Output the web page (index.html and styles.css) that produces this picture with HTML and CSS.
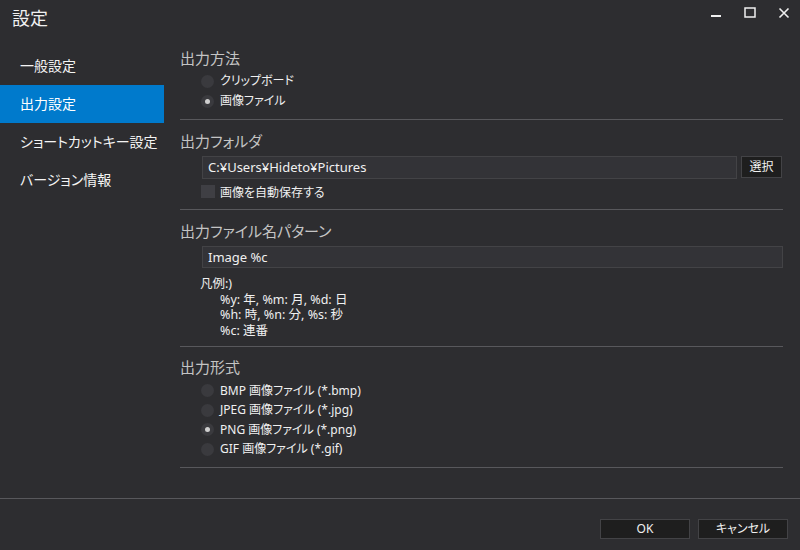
FILE: index.html
```html
<!DOCTYPE html>
<html lang="ja">
<head>
<meta charset="utf-8">
<title>設定</title>
<link rel="stylesheet" href="styles.css">
</head>
<body>
<div class="window">
  <header class="titlebar">
    <div class="title">設定</div>
    <div class="controls">
      <span class="ctl"><svg width="12" height="12" viewBox="0 0 12 12"><rect x="1" y="8" width="10" height="2" fill="#f0f0f0"/></svg></span>
      <span class="ctl"><svg width="12" height="12" viewBox="0 0 12 12"><rect x="1" y="1" width="10" height="9" fill="none" stroke="#f0f0f0" stroke-width="1.5"/></svg></span>
      <span class="ctl"><svg width="12" height="12" viewBox="0 0 12 12"><path d="M1.5 1.5 L10.5 10.5 M10.5 1.5 L1.5 10.5" stroke="#f0f0f0" stroke-width="1.6"/></svg></span>
    </div>
  </header>
  <div class="main">
    <nav class="sidebar">
      <div class="nav-item">一般設定</div>
      <div class="nav-item active">出力設定</div>
      <div class="nav-item">ショートカットキー設定</div>
      <div class="nav-item">バージョン情報</div>
    </nav>
    <section class="content">
      <div class="group g1">
        <h2 class="heading">出力方法</h2>
        <div class="options">
          <label class="radio-row"><span class="radio"></span>クリップボード</label>
          <label class="radio-row"><span class="radio checked"></span>画像ファイル</label>
        </div>
      </div>
      <div class="group g2">
        <h2 class="heading">出力フォルダ</h2>
        <div class="folder-row">
          <div class="textbox folder">C:¥Users¥Hideto¥Pictures</div>
          <div class="btn-select">選択</div>
        </div>
        <label class="check-row"><span class="checkbox"></span>画像を自動保存する</label>
      </div>
      <div class="group g3">
        <h2 class="heading">出力ファイル名パターン</h2>
        <div class="textbox pattern">Image %c</div>
        <div class="legend">
          <div class="legend-title">凡例:)</div>
          <div class="legend-line">%y: 年, %m: 月, %d: 日</div>
          <div class="legend-line">%h: 時, %n: 分, %s: 秒</div>
          <div class="legend-line">%c: 連番</div>
        </div>
      </div>
      <div class="group g4">
        <h2 class="heading">出力形式</h2>
        <div class="options fmt">
          <label class="radio-row"><span class="radio"></span>BMP 画像ファイル (*.bmp)</label>
          <label class="radio-row"><span class="radio"></span>JPEG 画像ファイル (*.jpg)</label>
          <label class="radio-row"><span class="radio checked"></span>PNG 画像ファイル (*.png)</label>
          <label class="radio-row"><span class="radio"></span>GIF 画像ファイル (*.gif)</label>
        </div>
      </div>
    </section>
  </div>
  <footer class="footer">
    <div class="btn">OK</div>
    <div class="btn">キャンセル</div>
  </footer>
</div>
</body>
</html>
```

FILE: styles.css
```css
* { box-sizing: border-box; margin: 0; padding: 0; }
html, body { background: #2d2d30; }
body {
  width: 800px;
  height: 550px;
  overflow: hidden;
  font-family: "Noto Sans", "Noto Sans CJK JP", sans-serif;
  font-feature-settings: "palt";
  color: #f0f0f0;
  font-size: 12px;
}
.window { display: flex; flex-direction: column; height: 550px; }
.titlebar {
  height: 40px;
  display: flex;
  justify-content: space-between;
  align-items: flex-start;
}
.title {
  font-size: 18px;
  line-height: 20px;
  padding: 8px 0 0 12px;
  color: #f0f0f0;
}
.controls { display: flex; padding: 7px 10px 0 0; gap: 22px; }
.ctl { width: 12px; height: 12px; display: block; }
.ctl svg { display: block; }
.main { display: flex; height: 458px; }
.sidebar { width: 164px; padding-top: 7px; flex: none; }
.nav-item {
  height: 38px;
  line-height: 38px;
  padding-left: 20px;
  font-size: 14px;
  color: #f4f4f4;
}
.nav-item.active { background: #007acc; color: #ffffff; }
.content { flex: 1; padding: 8px 17px 0 16px; }
.group { border-bottom: 1px solid #58585c; }
.heading {
  font-size: 15px;
  font-weight: normal;
  line-height: 20px;
  color: #c4c4c4;
}
.g2 .heading, .g3 .heading { margin-top: 11px; }
.g4 .heading { margin-top: 10px; }
.options { padding: 3px 0 8px 21px; }
.fmt { padding: 4px 0 8px 21px; }
.radio-row {
  display: flex;
  align-items: center;
  height: 20px;
  line-height: 20px;
}
.fmt .radio-row { height: 19.5px; }
.radio {
  width: 13px;
  height: 13px;
  border-radius: 50%;
  background: #3a3a3e;
  margin-right: 6px;
  position: relative;
  flex: none;
}
.radio.checked::after {
  content: "";
  position: absolute;
  width: 5px;
  height: 5px;
  left: 4px;
  top: 4px;
  border-radius: 50%;
  background: #cfcfcf;
}
.folder-row { display: flex; margin: 5px 0 0 22px; gap: 4px; }
.textbox {
  background: #333337;
  border: 1px solid #434346;
  height: 23px;
  line-height: 21px;
  padding-left: 5px;
  font-size: 13px;
  color: #f0f0f0;
}
.folder { width: 535px; }
.btn-select {
  width: 41px;
  height: 22px;
  line-height: 20px;
  background: #1e1e1e;
  border: 1px solid #434346;
  text-align: center;
  font-size: 12px;
}
.check-row {
  display: flex;
  align-items: center;
  height: 20px;
  margin: 2px 0 8px 21px;
  padding-top: 1px;
}
.checkbox {
  width: 14px;
  height: 13px;
  background: #3f3f44;
  margin-right: 5px;
}
.pattern { margin: 5px 0 0 22px; height: 22px; line-height: 20px; }
.legend { padding: 8px 0 8px 20px; font-size: 12.5px; }
.legend-title { line-height: 15.5px; }
.legend-line { line-height: 15.5px; padding-left: 20px; }
.footer {
  border-top: 1px solid #58585c;
  height: 52px;
  display: flex;
  justify-content: flex-end;
  gap: 8px;
  padding: 20px 12px 0 0;
}
.btn {
  width: 90px;
  height: 20px;
  line-height: 18px;
  background: #1e1e1e;
  border: 1px solid #434346;
  text-align: center;
  font-size: 12px;
}
```
